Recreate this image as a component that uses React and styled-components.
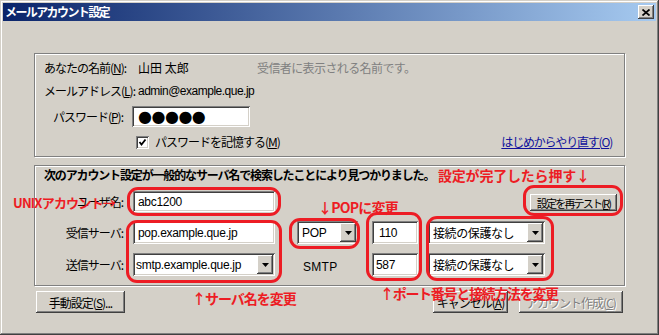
import React from 'react';
import styled, { createGlobalStyle } from 'styled-components';

const GlobalStyle = createGlobalStyle`
  html, body {
    margin: 0;
    padding: 0;
    background: #d4d0c8;
  }
  body {
    font-family: "Noto Sans CJK JP", "Liberation Sans", sans-serif;
    font-size: 12px;
    color: #000;
  }
`;

const jp = `"Noto Sans CJK JP", "Liberation Sans", sans-serif`;
const latin = `"Liberation Sans", "Noto Sans CJK JP", sans-serif`;
const red = '#ed1c24';

const raised = `
  background: #d4d0c8;
  box-shadow: inset -1px -1px #404040, inset 1px 1px #fff,
    inset -2px -2px #808080, inset 2px 2px #d4d0c8;
`;
const sunken = `
  background: #fff;
  box-shadow: inset 1px 1px #808080, inset -1px -1px #fff,
    inset 2px 2px #404040, inset -2px -2px #d4d0c8;
`;

const Window = styled.div`
  position: relative;
  width: 659px;
  height: 335px;
  box-sizing: border-box;
  padding: 3px;
  display: flex;
  flex-direction: column;
  overflow: hidden;
  background: #d4d0c8;
  box-shadow: inset -1px -1px #404040, inset 1px 1px #d4d0c8,
    inset -2px -2px #808080, inset 2px 2px #fff;
  font-family: ${jp};
  font-size: 12px;
  letter-spacing: -1px;
`;

const TitleBar = styled.div`
  height: 18px;
  flex: none;
  display: flex;
  align-items: center;
  justify-content: space-between;
  padding: 0 2px;
  background: linear-gradient(to right, #0a246a, #a6caf0);
`;

const Title = styled.span`
  color: #fff;
  font-weight: bold;
  line-height: 18px;
  letter-spacing: -1.6px;
`;

const CloseButton = styled.div`
  width: 16px;
  height: 14px;
  display: flex;
  align-items: center;
  justify-content: center;
  ${raised}
`;

const Body = styled.div`
  flex: 1;
  padding: 32px 31px 0;
  display: flex;
  flex-direction: column;
`;

const GroupBox = styled.div`
  border: 1px solid #808080;
  box-shadow: 1px 1px 0 #fff, inset 1px 1px 0 #fff;
  padding: ${(p) => p.$pad};
  margin-top: ${(p) => p.$gap || 0}px;
`;

const IdentityGrid = styled.div`
  display: grid;
  grid-template-columns: 88px 125px 1fr;
  grid-template-rows: 16px 16px 21px 16px;
  row-gap: 7px;
  align-items: center;
`;

const Label = styled.div`
  text-align: right;
  padding-right: ${(p) => p.$pr || 9}px;
  line-height: 16px;
  white-space: nowrap;
`;

const Value = styled.div`
  padding-left: 6px;
  line-height: 16px;
  white-space: nowrap;
  font-family: ${(p) => (p.$latin ? latin : jp)};
  letter-spacing: ${(p) => (p.$latin ? '-0.5px' : '0')};
`;

const Hint = styled.div`
  color: #808080;
  line-height: 16px;
  white-space: nowrap;
  letter-spacing: -0.6px;
`;

const Field = styled.div`
  width: ${(p) => p.$w}px;
  height: 100%;
  box-sizing: border-box;
  display: flex;
  align-items: center;
  padding-left: ${(p) => p.$pl || 5}px;
  font-family: ${(p) => (p.$jp ? jp : latin)};
  letter-spacing: ${(p) => (p.$jp ? '-0.4px' : '-0.3px')};
  white-space: nowrap;
  overflow: hidden;
  ${sunken}
`;

const Dots = styled.span`
  font-family: "DejaVu Sans", sans-serif;
  font-size: 16px;
  letter-spacing: -0.5px;
  line-height: 1;
`;

const CheckRow = styled.label`
  grid-column: 2 / 3;
  display: flex;
  align-items: center;
  gap: 6px;
  padding-left: 4px;
  white-space: nowrap;
  line-height: 16px;
`;

const CheckBox = styled.span`
  width: 13px;
  height: 13px;
  flex: none;
  display: flex;
  align-items: center;
  justify-content: center;
  ${sunken}
`;

const RestartLink = styled.a`
  justify-self: end;
  margin-right: 3px;
  color: #10109c;
  text-decoration: underline;
  line-height: 16px;
  white-space: nowrap;
  letter-spacing: -1.2px;
`;

const Heading = styled.div`
  font-weight: bold;
  line-height: 16px;
  letter-spacing: -1.15px;
  white-space: nowrap;
`;

const ServerGrid = styled.div`
  margin-top: 8px;
  display: grid;
  grid-template-columns: 89px 164px 75px 56px 1fr;
  grid-template-rows: 21px 23px 23px;
  row-gap: 9px;
  align-items: center;
`;

const Combo = styled(Field)`
  justify-content: space-between;
  padding-right: 2px;
`;

const DropButton = styled.span`
  width: 16px;
  height: calc(100% - 4px);
  flex: none;
  display: flex;
  align-items: center;
  justify-content: center;
  ${raised}
`;

const PlainText = styled.div`
  padding-left: 6px;
  padding-top: 4px;
  font-family: ${latin};
  letter-spacing: 0.3px;
`;

const Button = styled.div`
  width: ${(p) => p.$w}px;
  height: ${(p) => p.$h || 22}px;
  box-sizing: border-box;
  display: flex;
  align-items: center;
  justify-content: center;
  white-space: nowrap;
  letter-spacing: ${(p) => p.$ls || '-1px'};
  font-size: ${(p) => p.$fs || 12}px;
  color: ${(p) => (p.$disabled ? '#808080' : '#000')};
  text-shadow: ${(p) => (p.$disabled ? '1px 1px 0 #fff' : 'none')};
  ${raised}
`;

const TestButton = styled(Button)`
  grid-column: 5 / 6;
  justify-self: end;
  align-self: end;
  margin-bottom: 1px;
`;

const ButtonBar = styled.div`
  margin-top: 5px;
  padding: 0 2px;
  display: flex;
  gap: 11px;
`;

const Spacer = styled.div`
  flex: 1;
`;

const Mark = styled.div`
  position: absolute;
  left: ${(p) => p.$x}px;
  top: ${(p) => p.$y}px;
  width: ${(p) => p.$w}px;
  height: ${(p) => p.$h}px;
  box-sizing: border-box;
  border: 3px solid ${red};
  border-radius: 11px;
  pointer-events: none;
`;

const Note = styled.div`
  position: absolute;
  left: ${(p) => p.$x}px;
  top: ${(p) => p.$y}px;
  color: ${red};
  font-weight: bold;
  font-size: ${(p) => p.$fs || 14}px;
  line-height: 18px;
  letter-spacing: ${(p) => p.$ls}px;
  white-space: nowrap;
  pointer-events: none;
`;

const Arrow = () => (
  <svg width="7" height="4" viewBox="0 0 7 4">
    <polygon points="0,0 7,0 3.5,4" fill="#000" />
  </svg>
);

const marks = [
  { x: 127, y: 187, w: 154, h: 29 },
  { x: 126, y: 220, w: 156, h: 63 },
  { x: 289, y: 218, w: 71, h: 31 },
  { x: 366, y: 212, w: 56, h: 69 },
  { x: 426, y: 216, w: 128, h: 65 },
  { x: 523, y: 185, w: 100, h: 31 },
];

const notes = [
  { x: 438, y: 166, ls: -0.2, text: '設定が完了したら押す↓' },
  { x: 318, y: 198, ls: -0.8, text: '↓POPに変更' },
  { x: 13, y: 194, ls: -0.8, fs: 13, text: 'UNIXアカウント→' },
  { x: 192, y: 289, ls: -1, text: '↑サーバ名を変更' },
  { x: 380, y: 284, ls: -1.3, text: '↑ポート番号と接続方法を変更' },
];

export default function App() {
  return (
    <>
      <GlobalStyle />
      <Window>
        <TitleBar>
          <Title>メールアカウント設定</Title>
          <CloseButton>
            <svg width="8" height="7" viewBox="0 0 8 7">
              <path d="M0.5 0.5 L7.5 6.5 M7.5 0.5 L0.5 6.5" stroke="#000" strokeWidth="1.7" />
            </svg>
          </CloseButton>
        </TitleBar>

        <Body>
          <GroupBox $pad="6px 9px 6px 9px">
            <IdentityGrid>
              <Label>あなたの名前(<u>N</u>):</Label>
              <Value>山田 太郎</Value>
              <Hint>受信者に表示される名前です。</Hint>

              <Label>メールアドレス(<u>L</u>):</Label>
              <Value $latin>admin@example.que.jp</Value>
              <span />

              <Label>パスワード(<u>P</u>):</Label>
              <Field $w={118} $pl={6}>
                <Dots>●●●●●</Dots>
              </Field>
              <span />

              <span />
              <CheckRow>
                <CheckBox>
                  <svg width="9" height="9" viewBox="0 0 9 9">
                    <polyline points="1.5,4 3.5,6.5 7.5,1.5" fill="none" stroke="#000" strokeWidth="1.8" />
                  </svg>
                </CheckBox>
                <span>パスワードを記憶する(<u>M</u>)</span>
              </CheckRow>
              <RestartLink>はじめからやり直す(<u>O</u>)</RestartLink>
            </IdentityGrid>
          </GroupBox>

          <GroupBox $gap={8} $pad="1px 7px 9px 9px">
            <Heading>次のアカウント設定が一般的なサーバ名で検索したことにより見つかりました。</Heading>
            <ServerGrid>
              <Label $pr={10}>ユーザ名:</Label>
              <Field $w={142}>abc1200</Field>
              <TestButton $w={87} $h={17} $fs={11} $ls="-1.8px">
                設定を再テスト(<u>R</u>)
              </TestButton>

              <Label $pr={10}>受信サーバ:</Label>
              <Field $w={142}>pop.example.que.jp</Field>
              <Combo $w={61}>
                POP
                <DropButton><Arrow /></DropButton>
              </Combo>
              <Field $w={46} $pl={7}>110</Field>
              <Combo $w={117} $jp>
                接続の保護なし
                <DropButton><Arrow /></DropButton>
              </Combo>

              <Label $pr={10}>送信サーバ:</Label>
              <Combo $w={142} $pl={3}>
                smtp.example.que.jp
                <DropButton><Arrow /></DropButton>
              </Combo>
              <PlainText>SMTP</PlainText>
              <Field $w={46} $pl={4}>587</Field>
              <Combo $w={117} $jp>
                接続の保護なし
                <DropButton><Arrow /></DropButton>
              </Combo>
            </ServerGrid>
          </GroupBox>

          <ButtonBar>
            <Button $w={89}>
              手動設定(<u>S</u>)...
            </Button>
            <Spacer />
            <Button $w={75}>
              キャンセル(<u>A</u>)
            </Button>
            <Button $w={104} $disabled>
              アカウント作成(<u>C</u>)
            </Button>
          </ButtonBar>
        </Body>

        {marks.map((m, i) => (
          <Mark key={i} $x={m.x} $y={m.y} $w={m.w} $h={m.h} />
        ))}
        {notes.map((n, i) => (
          <Note key={i} $x={n.x} $y={n.y} $ls={n.ls} $fs={n.fs}>
            {n.text}
          </Note>
        ))}
      </Window>
    </>
  );
}
